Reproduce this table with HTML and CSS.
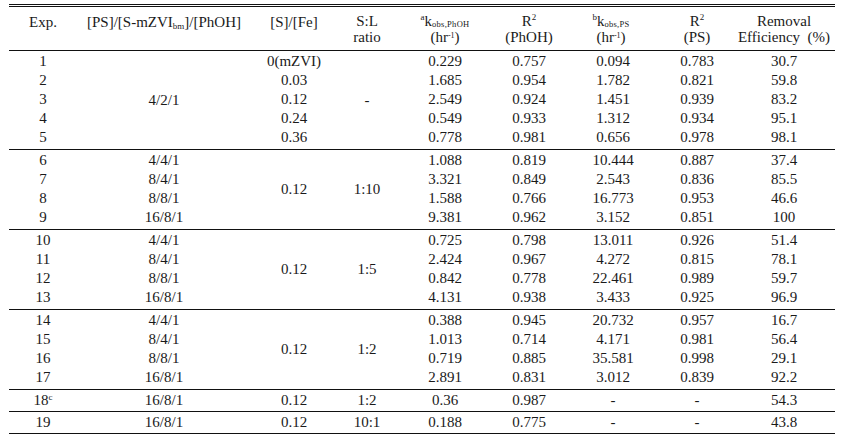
FILE: index.html
```html
<!DOCTYPE html>
<html>
<head>
<meta charset="utf-8">
<link rel="stylesheet" href="styles.css">
</head>
<body>
<table class="data">
  <colgroup>
    <col class="c1"><col class="c2"><col class="c3"><col class="c4"><col class="c5"><col class="c6"><col class="c7"><col class="c8"><col class="c9">
  </colgroup>
  <thead>
    <tr>
      <th class="single">Exp.</th>
      <th class="single">[PS]/[S-mZVI<span class="sub">bm</span>]/[PhOH]</th>
      <th class="single">[S]/[Fe]</th>
      <th>S:L<br>ratio</th>
      <th><span class="sup">a</span>k<span class="sub wide">obs,PhOH</span><br>(hr<span class="sup low">-1</span>)</th>
      <th>R<span class="sup">2</span><br>(PhOH)</th>
      <th class="shift"><span class="sup">b</span>k<span class="sub wide">obs,PS</span><br>(hr<span class="sup low">-1</span>)</th>
      <th>R<span class="sup">2</span><br>(PS)</th>
      <th>Removal<br>Efficiency&nbsp; (%)</th>
    </tr>
  </thead>
  <tbody>
    <tr class="first"><td>1</td><td rowspan="5">4/2/1</td><td>0(mZVI)</td><td rowspan="5">-</td><td>0.229</td><td>0.757</td><td>0.094</td><td>0.783</td><td>30.7</td></tr>
    <tr><td>2</td><td>0.03</td><td>1.685</td><td>0.954</td><td>1.782</td><td>0.821</td><td>59.8</td></tr>
    <tr><td>3</td><td>0.12</td><td>2.549</td><td>0.924</td><td>1.451</td><td>0.939</td><td>83.2</td></tr>
    <tr><td>4</td><td>0.24</td><td>0.549</td><td>0.933</td><td>1.312</td><td>0.934</td><td>95.1</td></tr>
    <tr class="last"><td>5</td><td>0.36</td><td>0.778</td><td>0.981</td><td>0.656</td><td>0.978</td><td>98.1</td></tr>

    <tr class="first"><td>6</td><td>4/4/1</td><td rowspan="4" class="span">0.12</td><td rowspan="4" class="span">1:10</td><td>1.088</td><td>0.819</td><td>10.444</td><td>0.887</td><td>37.4</td></tr>
    <tr><td>7</td><td>8/4/1</td><td>3.321</td><td>0.849</td><td>2.543</td><td>0.836</td><td>85.5</td></tr>
    <tr><td>8</td><td>8/8/1</td><td>1.588</td><td>0.766</td><td>16.773</td><td>0.953</td><td>46.6</td></tr>
    <tr class="last"><td>9</td><td>16/8/1</td><td>9.381</td><td>0.962</td><td>3.152</td><td>0.851</td><td>100</td></tr>

    <tr class="first"><td>10</td><td>4/4/1</td><td rowspan="4" class="span">0.12</td><td rowspan="4" class="span">1:5</td><td>0.725</td><td>0.798</td><td>13.011</td><td>0.926</td><td>51.4</td></tr>
    <tr><td>11</td><td>8/4/1</td><td>2.424</td><td>0.967</td><td>4.272</td><td>0.815</td><td>78.1</td></tr>
    <tr><td>12</td><td>8/8/1</td><td>0.842</td><td>0.778</td><td>22.461</td><td>0.989</td><td>59.7</td></tr>
    <tr class="last"><td>13</td><td>16/8/1</td><td>4.131</td><td>0.938</td><td>3.433</td><td>0.925</td><td>96.9</td></tr>

    <tr class="first"><td>14</td><td>4/4/1</td><td rowspan="4" class="span">0.12</td><td rowspan="4" class="span">1:2</td><td>0.388</td><td>0.945</td><td>20.732</td><td>0.957</td><td>16.7</td></tr>
    <tr><td>15</td><td>8/4/1</td><td>1.013</td><td>0.714</td><td>4.171</td><td>0.981</td><td>56.4</td></tr>
    <tr><td>16</td><td>8/8/1</td><td>0.719</td><td>0.885</td><td>35.581</td><td>0.998</td><td>29.1</td></tr>
    <tr class="last"><td>17</td><td>16/8/1</td><td>2.891</td><td>0.831</td><td>3.012</td><td>0.839</td><td>92.2</td></tr>

    <tr class="solo"><td>18<span class="sup small">c</span></td><td>16/8/1</td><td>0.12</td><td>1:2</td><td>0.36</td><td>0.987</td><td>-</td><td>-</td><td>54.3</td></tr>
    <tr class="solo end"><td>19</td><td>16/8/1</td><td>0.12</td><td>10:1</td><td>0.188</td><td>0.775</td><td>-</td><td>-</td><td>43.8</td></tr>
  </tbody>
</table>
</body>
</html>
```

FILE: styles.css
```css
html, body {
  margin: 0;
  padding: 0;
  background: #ffffff;
}

body {
  padding: 4px 0 0 9px;
  font-family: "Liberation Serif", "Times New Roman", serif;
  font-size: 15px;
  color: #1a1a1a;
}

.data {
  border-collapse: separate;
  border-spacing: 0;
  table-layout: fixed;
  width: 826px;
}

.c1 { width: 68px; }
.c2 { width: 174px; }
.c3 { width: 86px; }
.c4 { width: 60px; }
.c5 { width: 96px; }
.c6 { width: 72px; }
.c7 { width: 96px; }
.c8 { width: 72px; }
.c9 { width: 102px; }

.data th {
  font-weight: normal;
  text-align: center;
  vertical-align: middle;
  height: 43px;
  padding: 0;
  line-height: 16px;
  border-top: 3px double #111;
  white-space: nowrap;
}

.data th.single {
  padding-bottom: 13px;
  height: 30px;
}

.data th.shift {
  padding-right: 4px;
}

.data td {
  text-align: center;
  vertical-align: middle;
  padding: 0;
  height: 19px;
  line-height: 19px;
  white-space: nowrap;
}

.data tr.first td {
  border-top: 1px solid #111;
  padding-top: 1px;
}

.data tr.last td,
.data td.span {
  padding-bottom: 2px;
}

.data tr.solo td {
  border-top: 1px solid #111;
  padding-top: 1px;
  padding-bottom: 1px;
}

.data tr.end td {
  border-bottom: 1px solid #111;
}

.sup {
  font-size: 9px;
  line-height: 0;
  vertical-align: 6px;
}

.sup.low {
  font-size: 8px;
  vertical-align: 4px;
}

.sup.small {
  font-size: 9px;
  vertical-align: 5px;
}

.sub {
  font-size: 9px;
  line-height: 0;
  vertical-align: -2px;
}

.sub.wide {
  font-size: 8.5px;
  letter-spacing: 0.3px;
  vertical-align: -1px;
}
```
